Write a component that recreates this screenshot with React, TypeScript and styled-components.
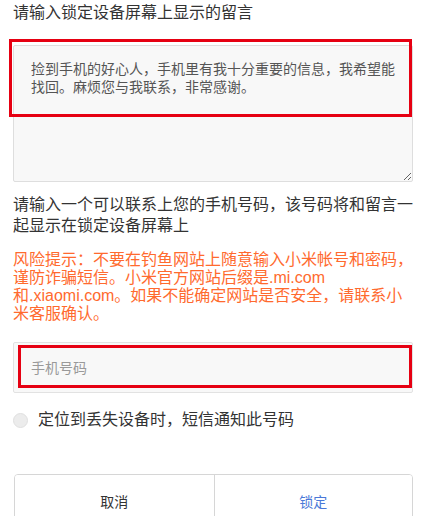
import styled, { createGlobalStyle } from "styled-components";

const GlobalStyle = createGlobalStyle`
  html, body {
    margin: 0;
    padding: 0;
    background: #fff;
  }
  body {
    font-family: "Liberation Sans", "Noto Sans CJK SC", sans-serif;
    color: #333;
  }
  * {
    box-sizing: border-box;
  }
`;

const Page = styled.div`
  width: 427px;
  height: 516px;
  overflow: hidden;
  padding: 0 14px 0 13px;
`;

const Heading = styled.div`
  font-size: 16px;
  line-height: 24px;
  color: #333;
  margin-top: 1px;
`;

const FieldWrap = styled.div<{ mt: number }>`
  position: relative;
  margin-top: ${({ mt }) => mt}px;
`;

// red annotation frame drawn over the field
const Highlight = styled.div<{ l: number; t: number; w: number; h: number }>`
  position: absolute;
  left: ${({ l }) => l}px;
  top: ${({ t }) => t}px;
  width: ${({ w }) => w}px;
  height: ${({ h }) => h}px;
  border: 3px solid #e60012;
  pointer-events: none;
`;

const MessageBox = styled.textarea`
  display: block;
  width: 400px;
  height: 137px;
  margin: 0;
  padding: 14px 16px 0 17px;
  background: #f8f8f8;
  border: 1px solid #dedede;
  border-radius: 2px;
  font-family: inherit;
  font-size: 14px;
  line-height: 18px;
  color: #555;
  resize: vertical;
  outline: none;
`;

const Paragraph = styled.div<{ mt: number; tone?: "warn" }>`
  margin-top: ${({ mt }) => mt}px;
  width: 400px;
  font-size: 16px;
  line-height: ${({ tone }) => (tone === "warn" ? 18 : 21)}px;
  color: ${({ tone }) => (tone === "warn" ? "#ff6a2e" : "#333")};
`;

const PhoneInput = styled.input`
  display: block;
  width: 400px;
  height: 51px;
  margin: 0;
  padding: 0 17px;
  background: #f8f8f8;
  border: 1px solid #e2e2e2;
  border-radius: 2px;
  font-family: inherit;
  font-size: 14px;
  color: #333;
  outline: none;
  &::placeholder {
    color: #999;
  }
`;

const CheckRow = styled.label`
  display: flex;
  align-items: center;
  gap: 10px;
  margin-top: 16px;
  font-size: 16px;
  line-height: 22px;
  color: #333;
`;

const RadioDot = styled.span`
  width: 15px;
  height: 15px;
  border-radius: 50%;
  background: #ececec;
  border: 1px solid #e0e0e0;
  flex-shrink: 0;
`;

const ButtonBar = styled.div`
  display: grid;
  grid-template-columns: 1fr 1fr;
  width: 399px;
  height: 56px;
  margin: 43px 0 0 1px;
  border: 1px solid #d6d6d6;
  border-radius: 4px;
  overflow: hidden;
`;

const ActionButton = styled.button<{ primary?: boolean }>`
  border: none;
  border-left: ${({ primary }) => (primary ? "1px solid #d6d6d6" : "none")};
  background: #fff;
  font-family: inherit;
  font-size: 14px;
  color: ${({ primary }) => (primary ? "#4a78d8" : "#333")};
  padding: 0 0 2px;
  cursor: pointer;
`;

const App = () => {
  return (
    <>
      <GlobalStyle />
      <Page>
        <Heading>请输入锁定设备屏幕上显示的留言</Heading>
        <FieldWrap mt={20}>
          <MessageBox defaultValue="捡到手机的好心人，手机里有我十分重要的信息，我希望能找回。麻烦您与我联系，非常感谢。" />
          <Highlight l={-4} t={-6} w={403} h={78} />
        </FieldWrap>
        <Paragraph mt={12}>
          请输入一个可以联系上您的手机号码，该号码将和留言一起显示在锁定设备屏幕上
        </Paragraph>
        <Paragraph mt={15} tone="warn">
          风险提示：不要在钓鱼网站上随意输入小米帐号和密码，谨防诈骗短信。小米官方网站后缀是.mi.com和.xiaomi.com。如果不能确定网站是否安全，请联系小米客服确认。
        </Paragraph>
        <FieldWrap mt={19}>
          <PhoneInput placeholder="手机号码" />
          <Highlight l={5} t={3} w={394} h={43} />
        </FieldWrap>
        <CheckRow>
          <RadioDot />
          定位到丢失设备时，短信通知此号码
        </CheckRow>
        <ButtonBar>
          <ActionButton>取消</ActionButton>
          <ActionButton primary>锁定</ActionButton>
        </ButtonBar>
      </Page>
    </>
  );
};

export default App;
